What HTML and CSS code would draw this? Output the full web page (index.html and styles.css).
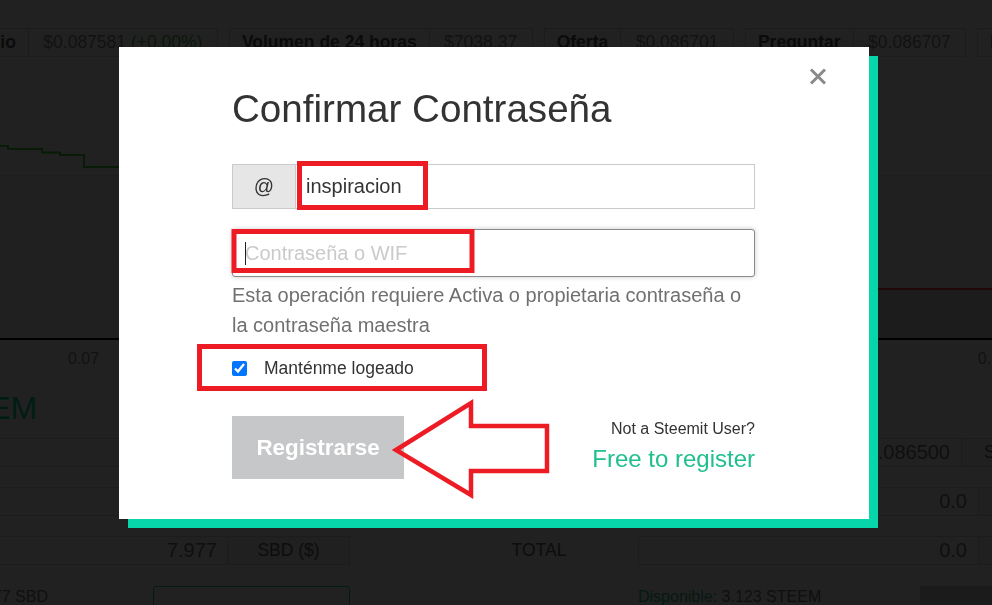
FILE: index.html
```html
<!DOCTYPE html>
<html lang="es">
<head>
<meta charset="utf-8">
<title>Confirmar Contraseña</title>
<link rel="stylesheet" href="styles.css">
</head>
<body>
<div class="page">
  <div class="ticker">
    <div class="tick"><span class="tick-label">Último precio</span><span class="tick-value">$0.087581 <span class="up">(+0.00%)</span></span></div>
    <div class="tick"><span class="tick-label">Volumen de 24 horas</span><span class="tick-value">$7038.37</span></div>
    <div class="tick"><span class="tick-label">Oferta</span><span class="tick-value">$0.086701</span></div>
    <div class="tick"><span class="tick-label">Preguntar</span><span class="tick-value">$0.086707</span></div>
    <div class="tick"><span class="tick-label">Diferencia</span><span class="tick-value">0.007%</span></div>
  </div>

  <svg class="chart" viewBox="0 0 992 250" width="992" height="250" aria-hidden="true">
    <rect x="0" y="85" width="992" height="165" fill="#f6f6f6"/>
    <line x1="0" y1="85.5" x2="992" y2="85.5" stroke="#e4e4e4"/>
    <line x1="0" y1="167.5" x2="992" y2="167.5" stroke="#e4e4e4"/>
    <path d="M0 56 H8 V59 H42 V62.5 H60 V65 H84 V77 H500" fill="none" stroke="#3ccf3c" stroke-width="2"/>
    <rect x="860" y="199" width="132" height="51" fill="#dcd6d6"/>
    <line x1="860" y1="199" x2="992" y2="199" stroke="#ff3b3b" stroke-width="2"/>
    <line x1="0" y1="249" x2="992" y2="249" stroke="#000" stroke-width="2"/>
  </svg>
  <div class="axis"><span>0.07</span><span>0.1</span></div>

  <h2 class="market-title">STEEM</h2>

  <div class="trade">
    <div class="group"><span class="field">0.086500</span><span class="addon">SBD/STEEM</span></div>
    <span></span>
    <span class="trade-label">PRECIO</span>
    <div class="group"><span class="field field-wide">0.086500</span><span class="addon addon-left">SBD/STEEM</span></div>

    <div class="group"><span class="field">0.0</span><span class="addon">STEEM</span></div>
    <span></span>
    <span class="trade-label">CANTIDAD</span>
    <div class="group"><span class="field field-full">0.0</span><span class="addon">STEEM</span></div>

    <div class="group"><span class="field">7.977</span><span class="addon">SBD ($)</span></div>
    <span></span>
    <span class="trade-label">TOTAL</span>
    <div class="group"><span class="field field-full">0.0</span><span class="addon">SBD ($)</span></div>

    <div class="balance-row balance-row-left"><span class="balance">Disponible: 7.977 SBD</span><span class="buy-btn"></span></div>
    <span></span>
    <span></span>
    <div class="balance-row"><span class="balance"><span class="avail">Disponible:</span> 3.123 STEEM</span><span class="sell-btn"></span></div>
  </div>
</div>

<div class="overlay">
  <div class="modal" role="dialog" aria-labelledby="modal-title">
    <button class="close" type="button" aria-label="Cerrar">
      <svg width="18" height="17" viewBox="0 0 18 17" aria-hidden="true"><path d="M2 1.5 L16 15.5 M16 1.5 L2 15.5" stroke="#8a8a8a" stroke-width="3" fill="none"/></svg>
    </button>

    <h1 class="modal-title" id="modal-title">Confirmar Contraseña</h1>

    <div class="input-group">
      <span class="input-addon">@</span>
      <input class="input-field" type="text" value="inspiracion" readonly>
    </div>

    <div class="password-wrap">
      <input class="password" type="password" placeholder="Contraseña o WIF">
      <span class="caret"></span>
    </div>

    <p class="help">Esta operación requiere Activa o propietaria contraseña o la contraseña maestra</p>

    <label class="remember"><input class="check" type="checkbox" checked><span>Manténme logeado</span></label>

    <div class="actions">
      <button class="submit" type="button">Registrarse</button>
      <div class="signup">
        <div class="signup-q">Not a Steemit User?</div>
        <a class="signup-link" href="#">Free to register</a>
      </div>
    </div>

    <svg class="annotations" width="750" height="472" viewBox="0 0 750 472" aria-hidden="true">
      <g fill="none" stroke="#ed1c24" stroke-width="5">
        <rect x="180.5" y="116.5" width="126" height="44"/>
        <rect x="115" y="184.5" width="238" height="39"/>
        <rect x="80.5" y="299.5" width="285" height="42"/>
      </g>
      <polygon points="277,403 352,356 352,379 428,379 428,424 352,424 352,448" fill="none" stroke="#ed1c24" stroke-width="4.5" stroke-linejoin="miter"/>
    </svg>
  </div>
</div>
</body>
</html>
```

FILE: styles.css
```css
* { box-sizing: border-box; }

html, body {
  margin: 0;
  padding: 0;
}

body {
  width: 992px;
  height: 605px;
  overflow: hidden;
  background: #fff;
  font-family: "Liberation Sans", Arial, Helvetica, sans-serif;
  color: #333;
  position: relative;
}

/* ---------- background market page ---------- */
.page {
  padding-top: 28px;
}

.ticker {
  display: flex;
  gap: 11px;
  margin-left: -109px;
  font-size: 17.5px;
  line-height: 27px;
  white-space: nowrap;
}

.tick {
  display: flex;
  border: 1px solid #d6d6d6;
}

.tick-label {
  font-weight: bold;
  color: #555;
  padding: 0 12px;
  border-right: 1px solid #d6d6d6;
}

.tick-value {
  color: #8a8a8a;
  padding: 0 14.5px;
}

.up { color: #4caf50; }

.chart {
  display: block;
  margin-top: 33px;
  width: 992px;
  height: 250px;
}

.axis {
  display: flex;
  justify-content: space-between;
  height: 36px;
  line-height: 38px;
  font-size: 16px;
  color: #8a8a8a;
  padding-left: 68px;
  margin-right: -8px;
}

.market-title {
  margin: 16px 0 0 -73px;
  font-size: 32px;
  line-height: 32px;
  font-weight: normal;
  color: #06d6a9;
}

.trade {
  display: grid;
  grid-template-columns: 550px 90px 198px 354px;
  row-gap: 20px;
  margin-top: 14px;
  margin-left: -200px;
  font-size: 17.5px;
  white-space: nowrap;
}

.group {
  display: flex;
  height: 29px;
  line-height: 27px;
}

.field {
  flex: 1 1 auto;
  border: 1px solid #d6d6d6;
  background: #fff;
  text-align: right;
  padding: 0 10px;
  font-size: 20px;
  color: #777;
}

.field-wide { flex: 0 0 324px; padding-right: 11px; }
.field-full { flex: 0 0 341px; padding-right: 11px; }

.addon {
  flex: 0 0 122px;
  border: 1px solid #d6d6d6;
  border-left: none;
  background: #f2f2f2;
  text-align: center;
  color: #666;
}

.addon-left {
  text-align: left;
  padding-left: 22px;
}

.trade-label {
  text-align: center;
  line-height: 29px;
  color: #666;
}

.balance-row {
  display: flex;
  justify-content: space-between;
  align-items: flex-start;
  font-size: 16px;
  line-height: 22px;
  margin-top: 1px;
}

.balance-row-left {
  padding-left: 87px;
}

.balance { color: #777; }
.avail { color: #1fbf8f; }

.buy-btn {
  width: 197px;
  height: 40px;
  border: 1px solid #1fbf8f;
  border-radius: 3px;
  background: #fff;
}

.sell-btn {
  width: 72px;
  height: 40px;
  background: #cfcfcf;
}

/* ---------- overlay + modal ---------- */
.overlay {
  position: fixed;
  inset: 0;
  background: rgba(0, 0, 0, 0.87);
}

.modal {
  position: relative;
  margin: 47px 0 0 119px;
  width: 750px;
  height: 472px;
  background: #fff;
  box-shadow: 9px 9px 0 #06d6a9;
  padding: 39px 114px 0 113px;
}

.close {
  position: absolute;
  top: 21px;
  right: 42px;
  width: 18px;
  height: 17px;
  padding: 0;
  border: none;
  background: none;
  line-height: 0;
}

.modal-title {
  margin: 0 0 32px;
  font-size: 38.6px;
  line-height: 46px;
  font-weight: normal;
  color: #333;
}

.input-group {
  display: flex;
  height: 45px;
}

.input-addon {
  flex: 0 0 64px;
  display: flex;
  align-items: center;
  justify-content: center;
  background: #e6e6e6;
  border: 1px solid #cacaca;
  font-size: 20px;
  color: #333;
}

.input-field {
  flex: 1 1 auto;
  min-width: 0;
  height: 45px;
  margin: 0;
  border: 1px solid #cacaca;
  border-left: none;
  border-radius: 0;
  padding: 0 10px;
  font-family: inherit;
  font-size: 20px;
  color: #333;
  background: #fff;
  outline: none;
}

.password-wrap {
  position: relative;
  margin-top: 20px;
}

.password {
  display: block;
  width: 100%;
  height: 48px;
  margin: 0;
  border: 1px solid #8a8a8a;
  border-radius: 3px;
  box-shadow: 0 0 5px #cacaca;
  padding: 0 12px;
  font-family: inherit;
  font-size: 20px;
  color: #333;
  background: #fff;
  outline: none;
  caret-color: transparent;
}

.password::placeholder {
  color: #cacaca;
  opacity: 1;
}

.caret {
  position: absolute;
  left: 13px;
  top: 13px;
  width: 1px;
  height: 23px;
  background: #222;
}

.help {
  margin: 3px 0 0;
  font-size: 20px;
  line-height: 30px;
  color: #707070;
}

.remember {
  display: flex;
  align-items: center;
  margin-top: 18px;
  height: 21px;
  font-size: 17.5px;
  color: #333;
}

.check {
  width: 15px;
  height: 15px;
  margin: 0 17px 0 0;
  flex: 0 0 auto;
}

.actions {
  display: flex;
  justify-content: space-between;
  align-items: flex-start;
  margin-top: 37px;
}

.submit {
  width: 172px;
  height: 63px;
  margin: 0;
  border: none;
  border-radius: 0;
  background: #c6c7c9;
  color: #fff;
  font-family: inherit;
  font-weight: bold;
  font-size: 22.4px;
  padding: 0;
}

.signup {
  margin-top: 3px;
  text-align: right;
}

.signup-q {
  font-size: 16px;
  line-height: 19.2px;
  color: #333;
}

.signup-link {
  display: block;
  margin-top: 7px;
  font-size: 24px;
  line-height: 28.8px;
  color: #1fbf8f;
  text-decoration: none;
}

.annotations {
  position: absolute;
  left: 0;
  top: 0;
  pointer-events: none;
}
```
